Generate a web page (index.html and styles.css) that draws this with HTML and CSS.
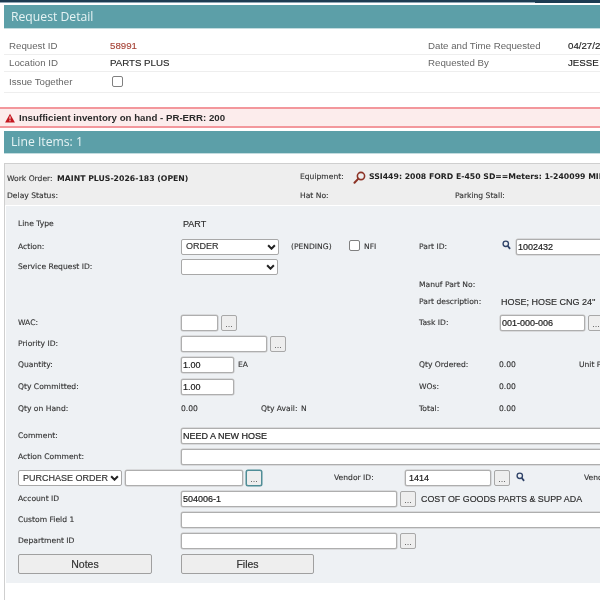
FILE: index.html
```html
<!DOCTYPE html>
<html lang="en">
<head>
<meta charset="utf-8">
<title>Request Detail</title>
<link rel="stylesheet" href="styles.css">
</head>
<body>
<div class="page">
  <div class="topbar"><div class="topbar-light"></div></div>
  <h2 class="band">Request Detail</h2>
  <div class="summary">
    <div class="sum-row">
      <span class="sum-label">Request ID</span><span class="sum-value red">58991</span>
      <span class="sum-label">Date and Time Requested</span><span class="sum-value dark">04/27/2026</span>
    </div>
    <div class="sum-row">
      <span class="sum-label">Location ID</span><span class="sum-value">PARTS PLUS</span>
      <span class="sum-label">Requested By</span><span class="sum-value dark">JESSE</span>
    </div>
    <div class="sum-row sum-row-last">
      <span class="sum-label">Issue Together</span><span class="sum-value"><span class="check"></span></span>
    </div>
  </div>
  <div class="alert">
    <svg class="alert-icon" viewBox="0 0 12 11" width="10" height="10"><path d="M6 .3 11.9 10.8H.1Z" fill="#c4161f"/><path d="M5.3 3.6h1.4L6.4 7.4h-.8ZM5.3 8.1h1.4v1.3H5.3Z" fill="#fff"/></svg>
    <span>Insufficient inventory on hand - PR-ERR: 200</span>
  </div>
  <h2 class="band band-lines">Line Items: 1</h2>

  <section class="panel">
    <div class="wo">
      <div class="wo-row">
        <span class="wo-order"><span class="lb">Work Order:</span> <b>MAINT PLUS-2026-183 (OPEN)</b></span>
        <span class="wo-equip lb">Equipment:</span>
        <svg class="wo-icon" viewBox="0 0 14 14" width="13" height="13"><circle cx="8.6" cy="5.4" r="3.9" fill="none" stroke="#8c3326" stroke-width="1.7"/><path d="M5.8 8.2 1.6 12.6" stroke="#8c3326" stroke-width="2.2" stroke-linecap="round"/></svg>
        <b class="wo-val">SSI449: 2008 FORD E-450 SD==Meters: 1-240099 MILES</b>
      </div>
      <div class="wo-row">
        <span class="wo-delay lb">Delay Status:</span>
        <span class="wo-hat lb">Hat No:</span>
        <span class="lb">Parking Stall:</span>
      </div>
    </div>

    <div class="form">
      <span class="lb r1 c1">Line Type</span>
      <span class="val val-part r1 c2">PART</span>

      <span class="lb r2 c1">Action:</span>
      <span class="selectbox sel-action r2 c2">ORDER<svg class="chev" viewBox="0 0 8 5" width="9" height="6"><path d="M1 1l3 3 3-3" fill="none" stroke="#222" stroke-width="1.8"/></svg></span>
      <span class="lb r2 c-pending">(PENDING)</span>
      <span class="nfi r2 c-nfi"><span class="check"></span><span class="lb">NFI</span></span>
      <span class="lb r2 c-lab2">Part ID:</span>
      <span class="part r2 c-val2">
        <svg class="mag" viewBox="0 0 10 11" width="9" height="10"><circle cx="4.2" cy="4.2" r="3" fill="none" stroke="#2f4368" stroke-width="1.5"/><path d="M6.3 6.5 9 9.8" stroke="#2f4368" stroke-width="1.9"/></svg>
        <span class="input w-part">1002432</span>
      </span>

      <span class="lb r3 c1">Service Request ID:</span>
      <span class="selectbox sel-service r3 c2"><svg class="chev" viewBox="0 0 8 5" width="9" height="6"><path d="M1 1l3 3 3-3" fill="none" stroke="#222" stroke-width="1.8"/></svg></span>

      <span class="lb r4 c-lab2">Manuf Part No:</span>

      <span class="lb r5 c-lab2">Part description:</span>
      <span class="val val-desc r5 c-val2">HOSE; HOSE CNG 24''</span>

      <span class="lb r6 c1">WAC:</span>
      <span class="field r6 c2"><span class="input w-wac"></span><span class="dots">...</span></span>
      <span class="lb r6 c-lab2">Task ID:</span>
      <span class="field r6 c-val2"><span class="input w-task">001-000-006</span><span class="dots">...</span></span>

      <span class="lb r7 c1">Priority ID:</span>
      <span class="field r7 c2"><span class="input w-priority"></span><span class="dots">...</span></span>

      <span class="lb r8 c1">Quantity:</span>
      <span class="field r8 c2"><span class="input w-qty">1.00</span><span class="lb ea">EA</span></span>
      <span class="lb r8 c-lab2">Qty Ordered:</span>
      <span class="lb num r8 c-val2">0.00</span>
      <span class="lb r8 c-last">Unit Price:</span>

      <span class="lb r9 c1">Qty Committed:</span>
      <span class="field r9 c2"><span class="input w-qty">1.00</span></span>
      <span class="lb r9 c-lab2">WOs:</span>
      <span class="lb num r9 c-val2">0.00</span>

      <span class="lb r10 c1">Qty on Hand:</span>
      <span class="lb r10 c2">0.00</span>
      <span class="lb r10 c-avail">Qty Avail:</span>
      <span class="lb r10 c-n">N</span>
      <span class="lb r10 c-lab2">Total:</span>
      <span class="lb num r10 c-val2">0.00</span>

      <span class="lb r11 c1">Comment:</span>
      <span class="input wide r11 c-wide">NEED A NEW HOSE</span>

      <span class="lb r12 c1">Action Comment:</span>
      <span class="input wide r12 c-wide"></span>

      <span class="po r13 c-full">
        <span class="selectbox sel-po">PURCHASE ORDER<svg class="chev" viewBox="0 0 8 5" width="9" height="6"><path d="M1 1l3 3 3-3" fill="none" stroke="#222" stroke-width="1.8"/></svg></span>
        <span class="input w-po"></span>
        <span class="dots dots-focus">...</span>
        <span class="lb vendor-label">Vendor ID:</span>
        <span class="input w-vendor">1414</span>
        <span class="dots">...</span>
        <svg class="mag mag-vendor" viewBox="0 0 10 11" width="9" height="10"><circle cx="4.2" cy="4.2" r="3" fill="none" stroke="#2f4368" stroke-width="1.5"/><path d="M6.3 6.5 9 9.8" stroke="#2f4368" stroke-width="1.9"/></svg>
        <span class="lb vendor-name">Vendor Name:</span>
      </span>

      <span class="lb r14 c1">Account ID</span>
      <span class="field r14 c-wide"><span class="input w-account">504006-1</span><span class="dots">...</span><span class="val account-name">COST OF GOODS PARTS &amp; SUPP ADA</span></span>

      <span class="lb r15 c1">Custom Field 1</span>
      <span class="input wide r15 c-wide"></span>

      <span class="lb r16 c1">Department ID</span>
      <span class="field r16 c-wide"><span class="input w-account"></span><span class="dots">...</span></span>

      <button class="btn btn-notes r17 c1" type="button">Notes</button>
      <button class="btn btn-files r17 c-wide" type="button">Files</button>
    </div>
  </section>
</div>
</body>
</html>
```

FILE: styles.css
```css
* { box-sizing: border-box; }
html, body { margin: 0; padding: 0; height: 100%; overflow: hidden; background: #fff; }
body { font-family: "Liberation Sans", Arial, sans-serif; color: #333; }
.page { width: 600px; height: 600px; overflow: hidden; filter: blur(.45px); }

.topbar { height: 3px; background: #1d3c52; margin-bottom: 2px; display: flex; align-items: flex-end; }
.topbar-light { flex: 0 0 535px; height: 1px; background: #8fa5b5; }

.band {
  margin: 0 0 0 4px;
  height: 24px;
  background: #5c9fa8;
  color: #e6f3f4;
  font: 400 12.2px/23px "Open Sans", sans-serif;
  padding-left: 7px;
  border-bottom: 1px solid #c3dcdf;
}
.band-lines { height: 23px; line-height: 22px; }

.summary { margin: 8px 0 0 4px; height: 70px; padding-top: 1px; }
.sum-row {
  height: 17px;
  display: grid;
  grid-template-columns: 101px 318px 140px 1fr;
  padding-left: 5px;
  font-size: 9.7px;
  line-height: 16px;
  border-bottom: 1px solid #eeeeee;
  white-space: nowrap;
  overflow: hidden;
}
.sum-row-last { height: 21px; line-height: 19px; }
.sum-label { color: #666; }
.sum-value { color: #2a2a2a; -webkit-text-stroke: .15px; }
.sum-value.red { color: #a8463a; }
.sum-value.dark { color: #1c1c1c; }
.sum-row .check { margin: 4px 0 0 2px; }

.check {
  display: inline-block;
  width: 11px;
  height: 11px;
  border: 1px solid #808080;
  border-radius: 2px;
  background: #fff;
}

.alert {
  height: 21px;
  background: #fcecec;
  border-top: 2px solid #f3979c;
  border-bottom: 2px solid #f3979c;
  display: flex;
  align-items: center;
  gap: 4px;
  padding-left: 5px;
  font-size: 9.7px;
  font-weight: 700;
  color: #2a2a2a;
  margin-bottom: 3px;
}

.panel { margin: 9px 0 0 4px; border-left: 1px solid #cfcfcf; border-top: 1px solid #cfcfcf; height: 437px; }
.lb { font: 400 7.6px/10px "DejaVu Sans", Verdana, sans-serif; color: #333; white-space: nowrap; -webkit-text-stroke: .12px; }
.num { margin-left: -1px; }
b { font: 700 7.75px/10px "DejaVu Sans", Verdana, sans-serif; color: #222; white-space: nowrap; }

.wo { height: 41px; background: #eeeeee; padding-top: 8px; overflow: hidden; }
.wo-row { display: flex; align-items: center; height: 10px; padding-left: 2px; margin-bottom: 9px; white-space: nowrap; }
.wo-order { flex: none; width: 293px; line-height: 10px; }
.wo-equip { flex: none; width: 53px; }
.wo-icon { margin-right: 3px; flex: none; }
.wo-delay { flex: none; width: 293px; }
.wo-hat { flex: none; width: 155px; }

.form {
  background: #eef1f4;
  height: 377px;
  margin: 1px 0 0 1px;
  padding-left: 12px;
  display: grid;
  grid-template-columns: 163px 80px 30px 58px 70px 81px 79px 200px;
  grid-template-rows: 7px 22px 23px 17px 19px 16px 26px 16px 26px 18px 26px 27px 16px 26px 16px 26px 16px 30px;
  align-items: center;
  width: 800px;
}
.r1 { grid-row: 2; } .r2 { grid-row: 3; } .r3 { grid-row: 4; } .r4 { grid-row: 5; } .r5 { grid-row: 6; }
.r6 { grid-row: 7; } .r7 { grid-row: 8; } .r8 { grid-row: 9; } .r9 { grid-row: 10; } .r10 { grid-row: 11; }
.r11 { grid-row: 12; } .r12 { grid-row: 13; } .r13 { grid-row: 14; } .r14 { grid-row: 15; } .r15 { grid-row: 16; }
.r16 { grid-row: 17; } .r17 { grid-row: 18; }

.c1 { grid-column: 1; }
.c2 { grid-column: 2 / span 2; }
.c-avail { grid-column: 3 / span 2; }
.c-n { grid-column: 4; margin-left: 10px; }
.c-pending { grid-column: 4; }
.c-nfi { grid-column: 5; }
.c-lab2 { grid-column: 6; }
.c-val2 { grid-column: 7 / span 2; }
.c-last { grid-column: 8; }
.c-wide { grid-column: 2 / -1; }
.c-full { grid-column: 1 / -1; }

.val { font: 400 9px/12px "Liberation Sans", Arial, sans-serif; color: #2c2c2c; -webkit-text-stroke: .15px; }
.val-part { margin-left: 2px; }
.val-desc { margin-left: 1px; white-space: nowrap; }

.input {
  display: block;
  height: 16px;
  background: #fff;
  border: 1px solid #aeaeae;
  box-shadow: 0 0 0 .5px #c4c4c4;
  border-radius: 2px;
  font: 400 9px/14px "Liberation Sans", Arial, sans-serif;
  color: #1c1c1c;
  -webkit-text-stroke: .2px;
  padding-left: 1px;
  flex: none;
  white-space: nowrap;
}
.wide { width: 600px; }
.w-part { width: 120px; }
.w-wac { width: 37px; }
.w-task { width: 85px; }
.w-priority { width: 86px; }
.w-qty { width: 53px; }
.w-account { width: 216px; }
.w-po { width: 118px; }
.w-vendor { width: 86px; padding-left: 3px; }

.selectbox {
  display: flex;
  align-items: center;
  height: 16px;
  background: #fff;
  border: 1px solid #a8a8a8;
  border-radius: 2px;
  font: 400 9px/13px "Liberation Sans", Arial, sans-serif;
  color: #333;
  -webkit-text-stroke: .15px;
  padding: 0 0 0 4px;
}
.chev { margin: 0 2px 0 auto; flex: none; }
.sel-action { width: 98px; }
.sel-service { width: 97px; }
.sel-po { width: 104px; flex: none; white-space: nowrap; }

.field { display: flex; align-items: center; gap: 3px; white-space: nowrap; }
.dots {
  display: flex;
  justify-content: center;
  align-items: flex-end;
  width: 16px;
  height: 16px;
  flex: none;
  background: #eeeeee;
  border: 1px solid #a8a8a8;
  border-radius: 2px;
  font: 400 8px/11px "DejaVu Sans", sans-serif;
  color: #555;
}
.dots-focus { border: 1px solid #4f8d96; box-shadow: 0 0 0 .5px #4f8d96; }

.ea { margin-left: 1px; }
.nfi { display: flex; align-items: center; gap: 4px; }
.nfi .check { margin-bottom: 3px; }
.part { display: flex; align-items: center; gap: 5px; margin-left: 2px; }
.part .mag { margin-bottom: 3px; }

.po { display: flex; align-items: center; gap: 3px; white-space: nowrap; }
.vendor-label { width: 68px; margin-left: 69px; }
.mag-vendor { margin: 0 0 3px 3px; }
.vendor-name { margin-left: 56px; }
.account-name { margin-left: 2px; font-size: 8.9px; }

.btn {
  height: 20px;
  background: #eeeeee;
  border: 1px solid #a0a0a0;
  border-radius: 2px;
  font: 400 10.5px/18px "Liberation Sans", Arial, sans-serif;
  color: #333;
  -webkit-text-stroke: .2px;
  padding: 0;
}
.btn-notes { width: 134px; }
.btn-files { width: 133px; }
```
